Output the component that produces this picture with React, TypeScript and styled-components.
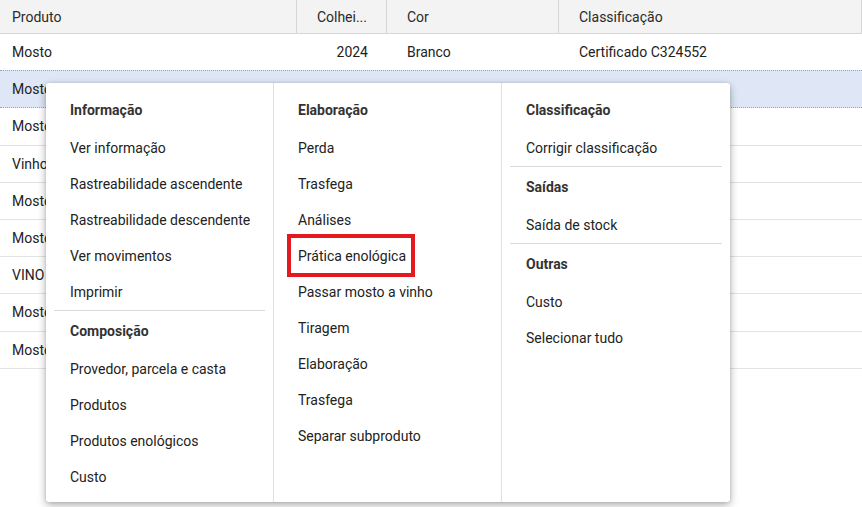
import React from "react";
import styled, { createGlobalStyle } from "styled-components";

const GlobalStyle = createGlobalStyle`
  html, body {
    margin: 0;
    padding: 0;
    background: #ffffff;
  }
  body {
    font-family: Roboto, "Noto Sans", Arial, sans-serif;
    font-size: 14px;
    color: #222222;
  }
`;

interface IRow {
  product: string;
  harvest?: string;
  color?: string;
  grade?: string;
}

const ROWS: IRow[] = [
  { product: "Mosto", harvest: "2024", color: "Branco", grade: "Certificado C324552" },
  { product: "Mosto" },
  { product: "Mosto" },
  { product: "Vinho" },
  { product: "Mosto" },
  { product: "Mosto" },
  { product: "VINO" },
  { product: "Mosto" },
  { product: "Mosto" },
];

interface IMenuItem {
  label: string;
  marked?: boolean;
}
interface IMenuGroup {
  title: string;
  items: IMenuItem[];
}

const MENU: IMenuGroup[][] = [
  [
    {
      title: "Informação",
      items: [
        { label: "Ver informação" },
        { label: "Rastreabilidade ascendente" },
        { label: "Rastreabilidade descendente" },
        { label: "Ver movimentos" },
        { label: "Imprimir" },
      ],
    },
    {
      title: "Composição",
      items: [
        { label: "Provedor, parcela e casta" },
        { label: "Produtos" },
        { label: "Produtos enológicos" },
        { label: "Custo" },
      ],
    },
  ],
  [
    {
      title: "Elaboração",
      items: [
        { label: "Perda" },
        { label: "Trasfega" },
        { label: "Análises" },
        { label: "Prática enológica", marked: true },
        { label: "Passar mosto a vinho" },
        { label: "Tiragem" },
        { label: "Elaboração" },
        { label: "Trasfega" },
        { label: "Separar subproduto" },
      ],
    },
  ],
  [
    { title: "Classificação", items: [{ label: "Corrigir classificação" }] },
    { title: "Saídas", items: [{ label: "Saída de stock" }] },
    { title: "Outras", items: [{ label: "Custo" }, { label: "Selecionar tudo" }] },
  ],
];

export default function App() {
  return (
    <Page>
      <GlobalStyle />
      <Grid>
        <HeaderRow>
          <HeadCell>Produto</HeadCell>
          <HeadCell $right>Colhei...</HeadCell>
          <HeadCell $pad={20}>Cor</HeadCell>
          <HeadCell $pad={20}>Classificação</HeadCell>
        </HeaderRow>
        {ROWS.map((row, i) => (
          <Row key={i} $selected={i === 1}>
            <Cell>{row.product}</Cell>
            <Cell $right>{row.harvest}</Cell>
            <Cell $pad={20}>{row.color}</Cell>
            <Cell $pad={20}>{row.grade}</Cell>
          </Row>
        ))}
      </Grid>

      <ContextMenu>
        {MENU.map((column, c) => (
          <MenuColumn key={c}>
            {column.map((group, g) => (
              <React.Fragment key={group.title}>
                {g > 0 && <Divider />}
                <GroupTitle>{group.title}</GroupTitle>
                {group.items.map((item) => (
                  <MenuItem key={item.label} $marked={item.marked}>
                    {item.label}
                  </MenuItem>
                ))}
              </React.Fragment>
            ))}
          </MenuColumn>
        ))}
      </ContextMenu>
    </Page>
  );
}

const Page = styled.div`
  position: relative;
  width: 862px;
  height: 507px;
  overflow: hidden;
  background: #ffffff;
`;

const Grid = styled.div`
  display: flex;
  flex-direction: column;
`;

const HeaderRow = styled.div`
  display: grid;
  grid-template-columns: 297px 90px 172px 1fr;
  height: 33px;
  background: #f3f3f3;
  border-bottom: 1px solid #d6d6d6;
`;

const HeadCell = styled.div<{ $right?: boolean; $pad?: number }>`
  display: flex;
  align-items: center;
  justify-content: ${(p) => (p.$right ? "flex-end" : "flex-start")};
  padding: ${(p) => (p.$right ? "0 19px 0 0" : `0 0 0 ${p.$pad ?? 12}px`)};
  border-right: 1px solid #d6d6d6;
  color: #2a2a2a;
  white-space: nowrap;
  overflow: hidden;
`;

const Row = styled.div<{ $selected?: boolean }>`
  display: grid;
  grid-template-columns: 297px 90px 172px 1fr;
  height: 37.2px;
  box-sizing: border-box;
  background: ${(p) => (p.$selected ? "#dfe7f6" : "#ffffff")};
  border-bottom: 1px ${(p) => (p.$selected ? "dotted #8fa3d4" : "solid #e3e3e3")};
  ${(p) =>
    p.$selected ? "border-top: 1px dotted #8fa3d4; margin-top: -1px; height: 38.2px;" : ""}
`;

const Cell = styled.div<{ $right?: boolean; $pad?: number }>`
  display: flex;
  align-items: center;
  justify-content: ${(p) => (p.$right ? "flex-end" : "flex-start")};
  padding: ${(p) => (p.$right ? "0 19px 0 0" : `0 0 0 ${p.$pad ?? 12}px`)};
  color: #222222;
  white-space: nowrap;
`;

const ContextMenu = styled.div`
  position: absolute;
  left: 46px;
  top: 83px;
  width: 684px;
  height: 419px;
  display: grid;
  grid-template-columns: 227px 228px 1fr;
  background: #ffffff;
  border-radius: 3px;
  box-shadow: 0 3px 8px rgba(0, 0, 0, 0.32), 0 0 3px rgba(0, 0, 0, 0.12);
`;

const MenuColumn = styled.div`
  display: flex;
  flex-direction: column;
  padding: 7px 0;
  & + & {
    border-left: 1px solid #e0e0e0;
  }
`;

const GroupTitle = styled.div`
  height: 40px;
  display: flex;
  align-items: center;
  padding-left: 24px;
  font-weight: 700;
  color: #333333;
`;

const MenuItem = styled.div<{ $marked?: boolean }>`
  position: relative;
  height: 36px;
  display: flex;
  align-items: center;
  padding-left: 24px;
  color: #222222;
  white-space: nowrap;
  &::after {
    content: "";
    display: ${(p) => (p.$marked ? "block" : "none")};
    position: absolute;
    left: 13px;
    top: -4px;
    width: 128px;
    height: 43px;
    box-sizing: border-box;
    border: 4px solid #e3191f;
  }
`;

const Divider = styled.div`
  height: 1px;
  margin: 0 8px;
  background: #d9d9d9;
`;
